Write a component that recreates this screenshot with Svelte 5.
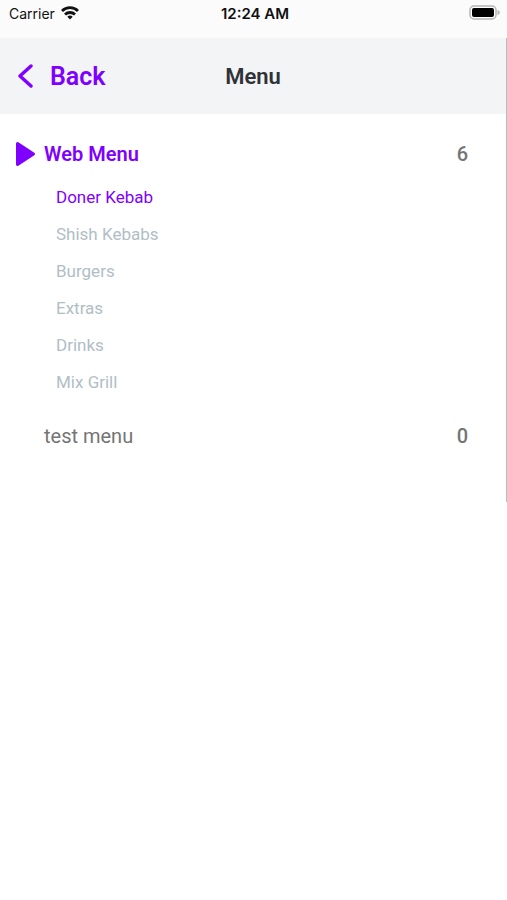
<script lang="ts">
	interface Menu {
		name: string;
		count: number;
		categories: string[];
	}

	const menus: Menu[] = [
		{
			name: 'Web Menu',
			count: 6,
			categories: ['Doner Kebab', 'Shish Kebabs', 'Burgers', 'Extras', 'Drinks', 'Mix Grill']
		},
		{ name: 'test menu', count: 0, categories: [] }
	];

	let openMenu = $state('Web Menu');
	let activeCategory = $state('Doner Kebab');
</script>

<div class="screen">
	<div class="status-bar">
		<div class="carrier">
			<span>Carrier</span>
			<svg class="wifi" viewBox="0 0 18 14" fill="none" stroke="currentColor" stroke-width="2.8">
				<path d="M1 5a11.400 11.400 0 0 1 16 0" />
				<path d="M4 8.500a7.200 7.200 0 0 1 10 0" />
				<path d="M9 13.600l-2.700-2.800a3.900 3.900 0 0 1 5.400 0z" fill="currentColor" stroke="none" />
			</svg>
		</div>
		<span class="time">12:24 AM</span>
		<svg class="battery" viewBox="0 0 32 16">
			<rect x="1" y="1" width="26" height="13" rx="4" fill="#fff" stroke="#b5b5b5" stroke-width="1.5" />
			<rect x="3" y="3" width="22" height="9" rx="2" fill="#000" />
			<path d="M28.5 5v5c1.4-.4 2.3-1.400 2.300-2.500s-.9-2.100-2.300-2.500z" fill="#b5b5b5" />
		</svg>
	</div>

	<div class="panel">
		<header class="header">
			<button class="back">
				<svg viewBox="0 0 16 26" fill="none" stroke="currentColor" stroke-width="3.4">
					<path d="M13 3L2 13l11 10" stroke-linecap="round" stroke-linejoin="round" />
				</svg>
				Back
			</button>
			<h1 class="title">Menu</h1>
		</header>

		<nav class="menus">
			{#each menus as menu (menu.name)}
				<section class="menu" class:open={menu.name === openMenu}>
					<button class="menu-row" onclick={() => (openMenu = menu.name)}>
						<span class="marker">
							{#if menu.name === openMenu}
								<svg viewBox="0 0 20 26" fill="currentColor">
									<path
										d="M1.500 2.500L17.500 13 1.500 23.500z"
										stroke="currentColor"
										stroke-width="3"
										stroke-linejoin="round"
									/>
								</svg>
							{/if}
						</span>
						<span class="menu-name">{menu.name}</span>
						<span class="menu-count">{menu.count}</span>
					</button>

					{#if menu.name === openMenu && menu.categories.length}
						<ul class="categories">
							{#each menu.categories as category (category)}
								<li>
									<button
										class="category"
										class:active={category === activeCategory}
										onclick={() => (activeCategory = category)}
									>
										{category}
									</button>
								</li>
							{/each}
						</ul>
					{/if}
				</section>
			{/each}
		</nav>
	</div>
</div>

<style>
	:global(body) {
		margin: 0;
		background: #fff;
	}

	.screen {
		min-height: 100vh;
		background: #fff;
		font-family: Roboto, 'Liberation Sans', sans-serif;
	}

	button {
		padding: 0;
		border: none;
		background: none;
		color: inherit;
		font: inherit;
		text-align: left;
		cursor: pointer;
	}

	/* Status bar */
	.status-bar {
		display: grid;
		grid-template-columns: 1fr auto 1fr;
		align-items: center;
		height: 26px;
		padding: 0 6px 12px 9px;
		background: #fbfbfb;
		color: #111;
		font-family: Inter, Roboto, sans-serif;
		font-size: 14px;
	}

	.carrier {
		display: flex;
		align-items: center;
		gap: 6px;
	}

	.wifi {
		width: 18px;
		height: 14px;
	}

	.time {
		font-size: 15px;
		font-weight: 600;
	}

	.battery {
		width: 32px;
		height: 16px;
		justify-self: end;
	}

	/* Header */
	.panel {
		border-right: 1px solid #b4bcc8;
		padding-bottom: 46px;
	}

	.header {
		display: grid;
		grid-template-columns: 1fr auto 1fr;
		align-items: center;
		height: 76px;
		padding: 0 18px;
		background: #f2f4f6;
	}

	.back {
		display: flex;
		align-items: center;
		gap: 16px;
		color: #7f00ff;
		font-size: 25px;
		font-weight: 600;
	}

	.back svg {
		width: 16px;
		height: 26px;
	}

	.title {
		margin: 0;
		color: #2f3236;
		font-size: 22px;
		font-weight: 600;
	}

	/* Menus */
	.menus {
		padding: 20px 38px 0 16px;
	}

	.menu-row {
		display: flex;
		align-items: center;
		width: 100%;
		height: 40px;
		color: #757575;
		font-size: 20px;
	}

	.marker {
		display: flex;
		width: 28px;
		color: #7f00ff;
	}

	.marker svg {
		width: 20px;
		height: 26px;
	}

	.menu-name {
		flex: 1;
	}

	.open .menu-name {
		color: #7f00ff;
		font-weight: 600;
	}

	.menu-count {
		font-weight: 500;
	}

	.categories {
		margin: 0;
		padding: 4px 0 16px 40px;
		list-style: none;
	}

	.category {
		display: block;
		width: 100%;
		height: 37px;
		color: #b0bec5;
		font-size: 17px;
	}

	.category.active {
		color: #7f00ff;
	}
</style>
